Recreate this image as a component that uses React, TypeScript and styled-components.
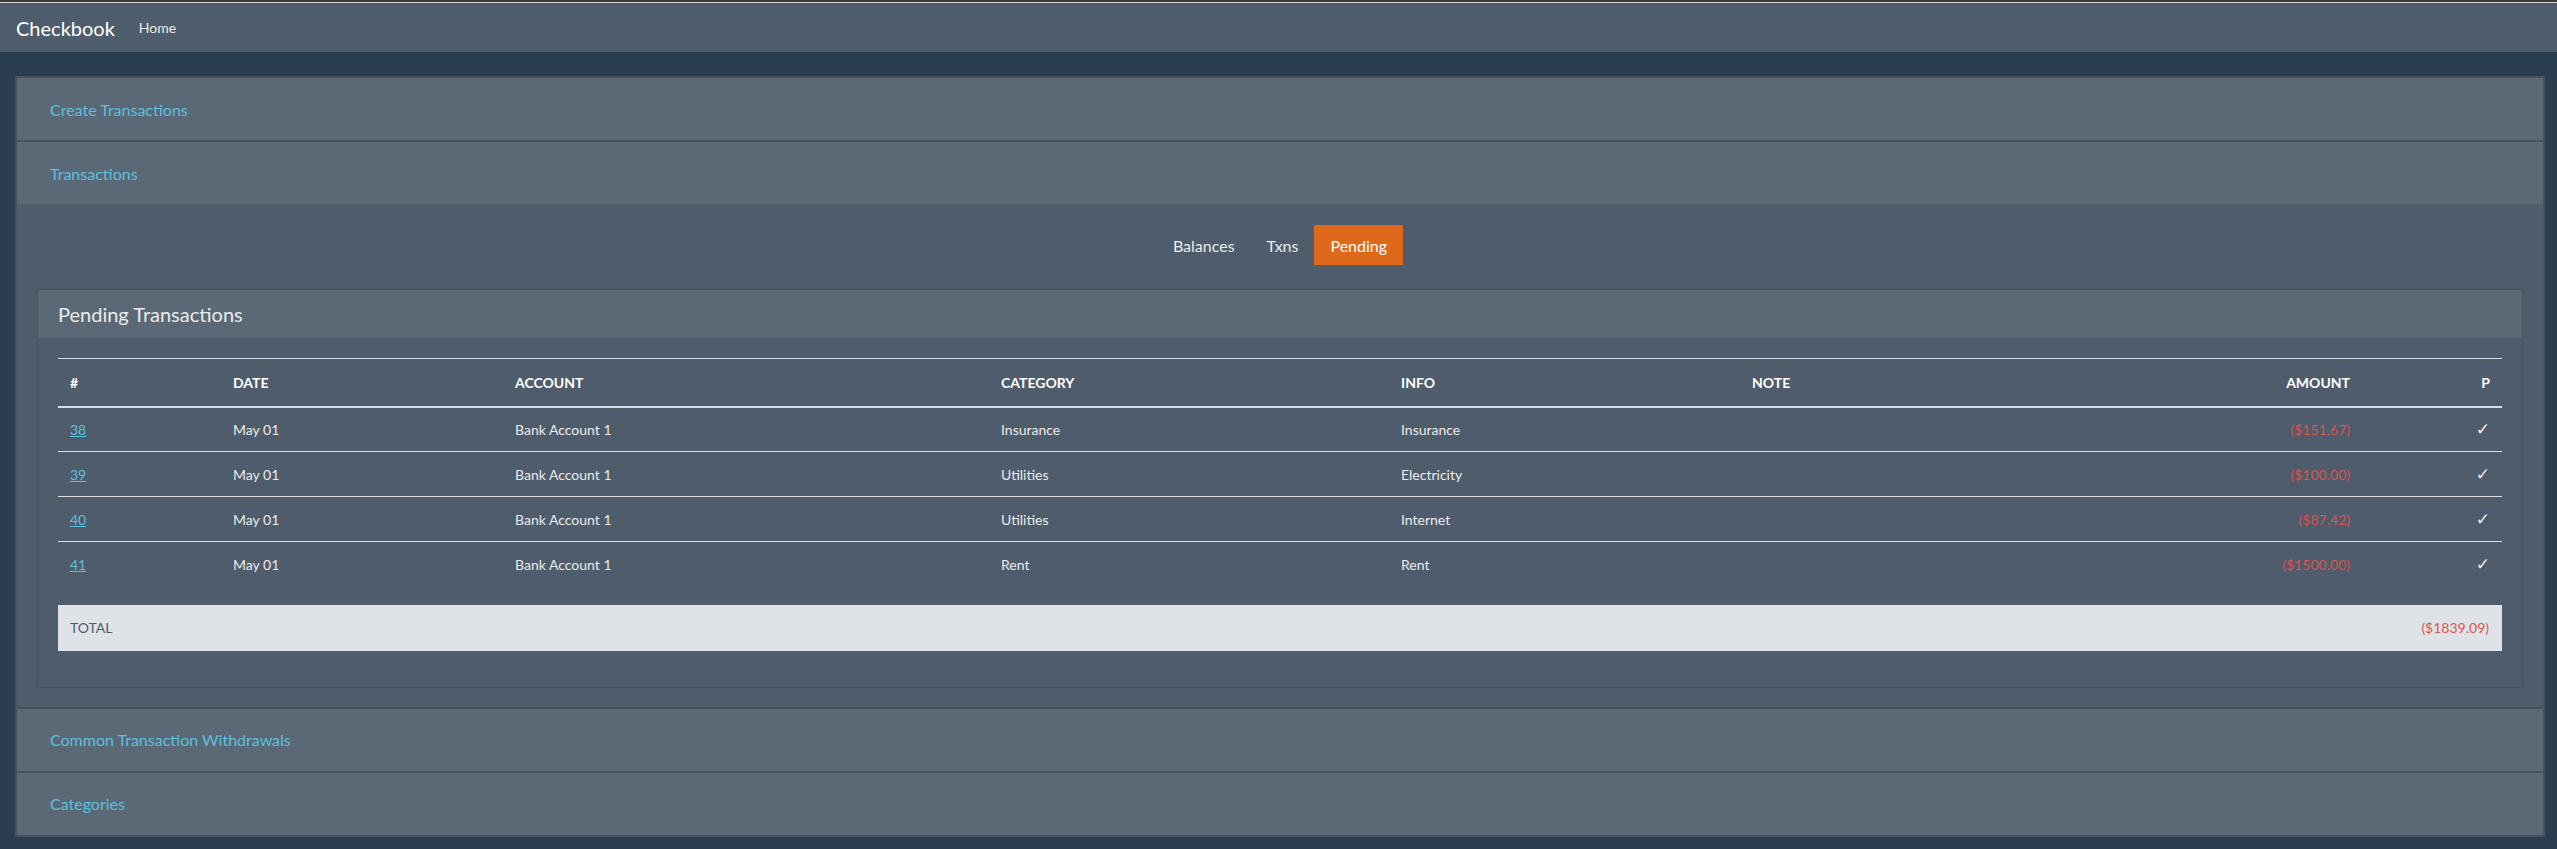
import React from "react";
import styled, { createGlobalStyle } from "styled-components";

const Global = createGlobalStyle`
  html, body { margin: 0; padding: 0; background: #2b3e50; }
  body { font-family: Lato, "Open Sans", "Liberation Sans", sans-serif; color: #ebebeb; }
  * { box-sizing: border-box; }
`;

const TopStrip = styled.div`
  height: 3px;
  background: #3a3a3a;
  border-bottom: 1px solid #d4d4d4;
`;

const Navbar = styled.nav`
  height: 49px;
  background: #4e5d6c;
  display: flex;
  align-items: center;
  padding-left: 16px;
`;

const Brand = styled.span`
  font-size: 20px;
  color: #ffffff;
  margin-right: 24px;
`;

const NavLink = styled.span`
  font-size: 14px;
  color: #ebebeb;
`;

const Page = styled.main`
  padding: 24px 12px 0 15px;
`;

const Group = styled.div`
  border: 1px solid #46535f;
`;

const Panel = styled.section`
  border: 1px solid #46535f;
`;

const Heading = styled.div`
  height: 62px;
  background: #5b6876;
  display: flex;
  align-items: center;
  padding-left: 33px;
`;

const HeadingLink = styled.a`
  font-size: 16px;
  color: #5bc0de;
  text-decoration: none;
`;

const Body = styled.div`
  background: #4e5c6b;
  padding: 21px 20px 19px 20px;
`;

const Tabs = styled.div`
  display: flex;
  justify-content: center;
  margin-bottom: 24px;
`;

const Tab = styled.span<{ $active?: boolean }>`
  height: 40px;
  padding: 0 16px;
  display: flex;
  align-items: center;
  font-size: 16px;
  color: ${(p) => (p.$active ? "#ffffff" : "#ebebeb")};
  background: ${(p) => (p.$active ? "#df691a" : "transparent")};
`;

const Card = styled.div`
  border: 1px solid #45525f;
  background: #4e5c6b;
`;

const CardHeading = styled.div`
  height: 48px;
  background: #5b6876;
  display: flex;
  align-items: center;
  padding: 0 20px;
  font-size: 20px;
  color: #ebebeb;
`;

const CardBody = styled.div`
  padding: 20px 20px 36px 20px;
`;

const Table = styled.table`
  width: 100%;
  table-layout: fixed;
  border-collapse: collapse;
  font-size: 14px;
`;

const Th = styled.th<{ $right?: boolean }>`
  height: 48px;
  padding: 0 12px;
  text-align: ${(p) => (p.$right ? "right" : "left")};
  font-weight: 700;
  color: #ffffff;
  border-top: 1px solid #dddddd;
  border-bottom: 2px solid #dddddd;
`;

const Tr = styled.tr`
  & + & td { border-top: 1px solid #dddddd; }
`;

const Td = styled.td<{ $right?: boolean; $danger?: boolean }>`
  height: 45px;
  padding: 0 12px;
  text-align: ${(p) => (p.$right ? "right" : "left")};
  color: ${(p) => (p.$danger ? "#d9534f" : "#ebebeb")};
`;

const IdLink = styled.a`
  color: #5bc0de;
  text-decoration: underline;
`;

const Check = styled.span`
  font-family: "DejaVu Sans", sans-serif;
  font-size: 17px;
`;

const TotalBar = styled.div`
  margin-top: 18px;
  height: 46px;
  background: #dfe3e8;
  display: flex;
  align-items: center;
  justify-content: space-between;
  padding: 0 13px 0 12px;
  font-size: 14px;
`;

const TotalLabel = styled.span`
  color: #4e5d6c;
`;

const TotalAmount = styled.span`
  color: #d9534f;
`;

const cols = [163, 282, 486, 400, 351, 400, 222, 140];

const rows = [
  { id: "38", cat: "Insurance", info: "Insurance", amt: "($151.67)" },
  { id: "39", cat: "Utilities", info: "Electricity", amt: "($100.00)" },
  { id: "40", cat: "Utilities", info: "Internet", amt: "($87.42)" },
  { id: "41", cat: "Rent", info: "Rent", amt: "($1500.00)" },
];

export default function App() {
  return (
    <>
      <Global />
      <TopStrip />
      <Navbar>
        <Brand>Checkbook</Brand>
        <NavLink>Home</NavLink>
      </Navbar>
      <Page>
        <Group>
          <Panel>
            <Heading>
              <HeadingLink>Create Transactions</HeadingLink>
            </Heading>
          </Panel>
          <Panel>
            <Heading>
              <HeadingLink>Transactions</HeadingLink>
            </Heading>
            <Body>
              <Tabs>
                <Tab>Balances</Tab>
                <Tab>Txns</Tab>
                <Tab $active>Pending</Tab>
              </Tabs>
              <Card>
                <CardHeading>Pending Transactions</CardHeading>
                <CardBody>
                  <Table>
                    <colgroup>
                      {cols.map((w, i) => (
                        <col key={i} style={{ width: w }} />
                      ))}
                    </colgroup>
                    <thead>
                      <tr>
                        <Th>#</Th>
                        <Th>DATE</Th>
                        <Th>ACCOUNT</Th>
                        <Th>CATEGORY</Th>
                        <Th>INFO</Th>
                        <Th>NOTE</Th>
                        <Th $right>AMOUNT</Th>
                        <Th $right>P</Th>
                      </tr>
                    </thead>
                    <tbody>
                      {rows.map((r) => (
                        <Tr key={r.id}>
                          <Td>
                            <IdLink>{r.id}</IdLink>
                          </Td>
                          <Td>May 01</Td>
                          <Td>Bank Account 1</Td>
                          <Td>{r.cat}</Td>
                          <Td>{r.info}</Td>
                          <Td></Td>
                          <Td $right $danger>
                            {r.amt}
                          </Td>
                          <Td $right>
                            <Check>✓</Check>
                          </Td>
                        </Tr>
                      ))}
                    </tbody>
                  </Table>
                  <TotalBar>
                    <TotalLabel>TOTAL</TotalLabel>
                    <TotalAmount>($1839.09)</TotalAmount>
                  </TotalBar>
                </CardBody>
              </Card>
            </Body>
          </Panel>
          <Panel>
            <Heading>
              <HeadingLink>Common Transaction Withdrawals</HeadingLink>
            </Heading>
          </Panel>
          <Panel>
            <Heading>
              <HeadingLink>Categories</HeadingLink>
            </Heading>
          </Panel>
        </Group>
      </Page>
    </>
  );
}
